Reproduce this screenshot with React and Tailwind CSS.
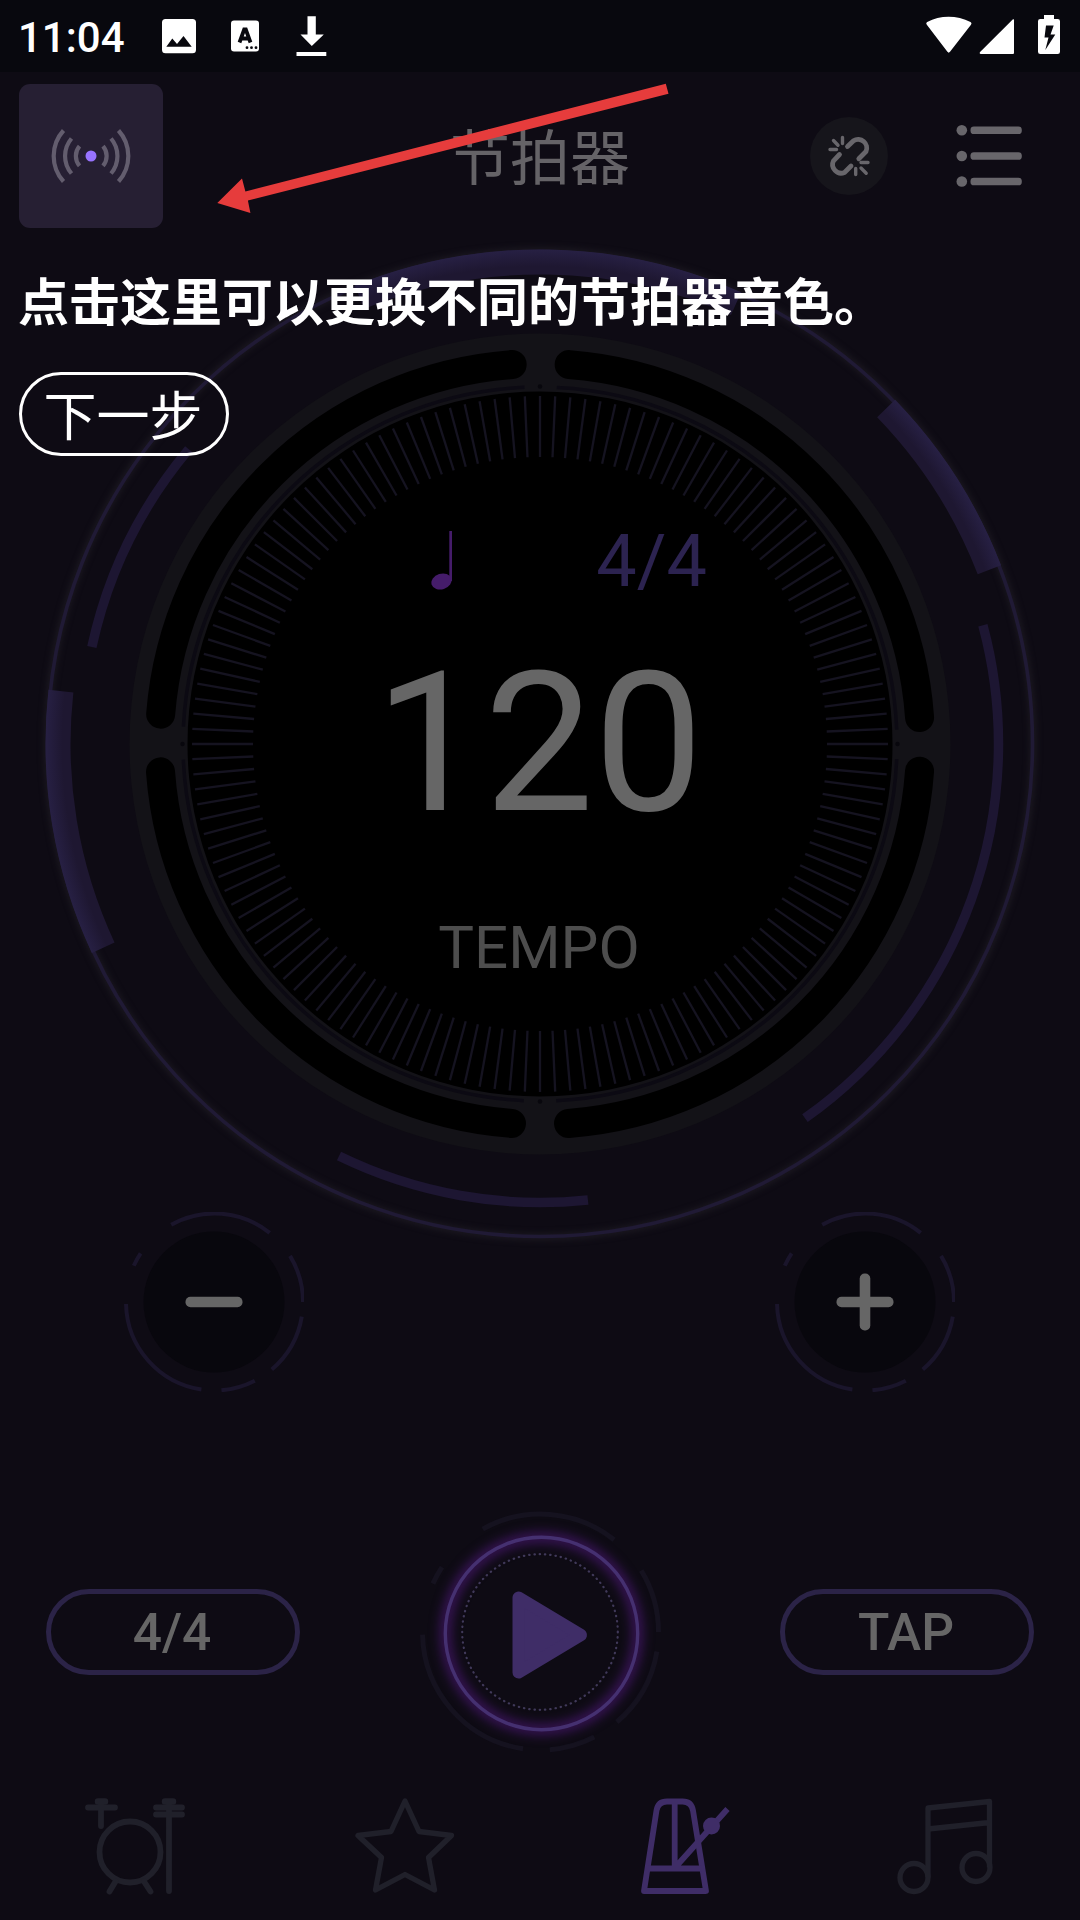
const CX = 540;
const CY = 504;

const TICKS = Array.from({ length: 144 }, (_, i) => i * 2.5);

// Point on a circle, angle in degrees, clockwise from 3 o'clock
const polar = (cx, cy, r, deg) => {
  const a = (deg * Math.PI) / 180;
  return [cx + r * Math.cos(a), cy + r * Math.sin(a)];
};

const arcPath = (cx, cy, r, from, to) => {
  const [x1, y1] = polar(cx, cy, r, from);
  const [x2, y2] = polar(cx, cy, r, to);
  return `M${x1} ${y1}A${r} ${r} 0 ${to - from > 180 ? 1 : 0} 1 ${x2} ${y2}`;
};

const THICK_ARCS = [
  [248, 294],
  [315.9, 338.8],
  [155, 186.3],
];

const THIN_ARCS = [
  [-15, 54.7],
  [84, 116],
  [192.2, 220],
];

const SLOTS = [
  [4.1, 85.7],
  [94.3, 175.8],
  [184.5, 265.8],
  [274.4, 356],
];

const BUTTON_ARCS = [
  [-119.3, -51.4],
  [-31.4, 0],
  [9.5, 49.7],
  [62.9, 85.5],
  [98.5, 178.7],
  [204.2, 213.4],
];

const StatusBar = () => (
  <div className="flex h-[72px] shrink-0 items-center justify-between bg-[#08080e] pl-[18px] pr-[19px] text-white">
    <div className="flex h-full items-center">
      <span className="w-36 pt-1 text-[42px] font-medium leading-none">11:04</span>
      <svg width="170" height="72" viewBox="162 0 170 72" fill="currentColor">
        <path
          fillRule="evenodd"
          d="M166 19h26.500a3.500 3.500 0 0 1 3.500 3.500v27.300a3.500 3.500 0 0 1-3.500 3.500H165.500a3.500 3.500 0 0 1-3.500-3.500V22.500a3.500 3.500 0 0 1 3.500-3.500zM166.300 46.700H191.700L183.500 36L177 44L172.300 38.500z"
        />
        <rect x="231" y="20.500" width="28" height="31" rx="3" />
        <path d="M239.500 42.500L244.200 29.500H245.800L250.500 42.500M241.500 38.500h7" fill="none" stroke="#08080e" strokeWidth="3.800" />
        <g fill="#08080e">
          <circle cx="247" cy="47.700" r="1.400" />
          <circle cx="251.500" cy="47.700" r="1.400" />
          <circle cx="256" cy="47.700" r="1.400" />
        </g>
        <path d="M307.500 16.300h8.300v18.200h8L311.800 46L300.500 34.500h7zM296.500 52h29.800v4H296.500z" />
      </svg>
    </div>
    <svg width="136" height="72" viewBox="925 0 136 72" fill="currentColor">
      <path d="M927 25c-1-1.200-1-2 .2-2.900C940 14.900 957 14.900 970.500 22.100c1.200.9 1.300 1.700.3 2.900L950 51.800c-.8 1.100-1.800 1.100-2.600 0z" />
      <path d="M1012.700 19.500c1-.8 1.300-.2 1.300.8V52.500c0 1-.5 1.500-1.500 1.500H980.800c-1.200 0-1.500-1-.7-1.900z" />
      <path
        fillRule="evenodd"
        d="M1044 15h10v4h3.700a2.300 2.300 0 0 1 2.300 2.300v30.400a2.300 2.300 0 0 1-2.300 2.300h-17.400a2.300 2.300 0 0 1-2.300-2.300V21.300a2.300 2.300 0 0 1 2.300-2.300h3.700zM1046 25.500L1044.500 37.500H1048.500L1045.300 50L1055.300 34.500H1050.500L1053.700 25.500z"
      />
    </svg>
  </div>
);

const Header = () => (
  <header className="flex h-[168px] shrink-0 items-center pl-[19px] pr-[58px]">
    <button className="flex size-36 items-center justify-center rounded-[11px] bg-[#261f33]">
      <svg width="80" height="56" viewBox="-40 -28 80 56" fill="none">
        <circle r="5.500" fill="#9873ff" />
        <g stroke="#635d6e" strokeWidth="4.200">
          <path d="M-11.500 -9.800A15 15 0 0 0 -11.500 9.800M-19.500 -17.500A27 27 0 0 0 -19.500 17.500M-27.500 -25.500A38 38 0 0 0 -27.500 25.500" />
          <path d="M12 -9.800A15 15 0 0 1 12 9.800M20 -17.500A27 27 0 0 1 20 17.500M27.500 -25.500A38 38 0 0 1 27.500 25.500" />
        </g>
      </svg>
    </button>
    <h1 className="ml-[287px] w-[182px] pt-[7px] text-[60px] leading-none text-[#656367]">节拍器</h1>
    <button className="ml-[178px] flex size-[78px] items-center justify-center rounded-full bg-[#16151b]">
      <svg width="44" height="44" viewBox="-22 -22 44 44" fill="none" stroke="#68666b" strokeWidth="4.800" strokeLinecap="round" strokeLinejoin="round">
        <path d="M-1.500 -9.500L4.500 -15.200A8.600 8.600 0 0 1 17 -4.500L9.800 2.800" />
        <path d="M-9.500 -1.500L-15.500 4.800A8.600 8.600 0 0 0 -4.500 16.500L2 10" />
        <path d="M-6.500 -18.500V-12.500M-15.500 -15.500L-11 -10.800M-19 -6.500H-12.500M6.700 12.500V18.500M12 12L17.200 17.200M12 6.500H19" strokeWidth="3.400" />
      </svg>
    </button>
    <button className="ml-[68px]">
      <svg width="66" height="64" viewBox="956 124 66 64" fill="#68666b">
        {[130.3, 156, 181.5].map((y) => (
          <g key={y}>
            <circle cx="961.800" cy={y} r="5.300" />
            <rect x="970.500" y={y - 3.8} width="51.300" height="7.600" rx="3.400" />
          </g>
        ))}
      </svg>
    </button>
  </header>
);

const Dial = () => (
  <section className="grid h-[1008px] shrink-0">
    <svg className="col-start-1 row-start-1" width="1080" height="1008" viewBox="0 0 1080 1008" fill="none">
      <defs>
        <filter id="glow" x="-10%" y="-10%" width="120%" height="120%" colorInterpolationFilters="sRGB">
          <feGaussianBlur stdDeviation="3" />
        </filter>
        <radialGradient id="band" gradientUnits="userSpaceOnUse" cx={CX} cy={CY} r="495">
          <stop offset="0.965" stopColor="#1e1731" />
          <stop offset="1" stopColor="#272044" />
        </radialGradient>
      </defs>
      <circle cx={CX} cy={CY} r="493" stroke="#1d1a22" strokeWidth="6" filter="url(#glow)" />
      <circle cx={CX} cy={CY} r="492.500" stroke="#201a35" strokeWidth="3.600" />
      {THICK_ARCS.map(([a, b]) => (
        <path key={a} d={arcPath(CX, CY, 482, a, b)} stroke="url(#band)" strokeWidth="25" />
      ))}
      {THIN_ARCS.map(([a, b]) => (
        <path key={a} d={arcPath(CX, CY, 458.5, a, b)} stroke="#1d1632" strokeWidth="9.500" />
      ))}

      <circle cx={CX} cy={CY} r="410.500" fill="#131217" />
      {SLOTS.map(([a, b]) => (
        <path key={a} d={arcPath(CX, CY, 380.5, a, b)} stroke="#000" strokeWidth="29" strokeLinecap="round" />
      ))}
      {SLOTS.map(([a, b]) => (
        <path key={a} d={arcPath(CX, CY, 357, a - 1.7, b + 1.7)} stroke="#0c0a13" strokeWidth="3.500" />
      ))}
      {[0, 90, 180, 270].map((a) => {
        const [x, y] = polar(CX, CY, 357.500, a);
        return <circle key={a} cx={x} cy={y} r="2.200" fill="#08070d" />;
      })}
      <circle cx={CX} cy={CY} r="352.500" fill="#000" />
      {TICKS.map((a) => {
        const [x1, y1] = polar(CX, CY, 287, a);
        const [x2, y2] = polar(CX, CY, 348, a);
        return <line key={a} x1={x1} y1={y1} x2={x2} y2={y2} stroke="#151320" strokeWidth="2.300" />;
      })}
    </svg>

    <div className="col-start-1 row-start-1 flex flex-col items-center pt-[282px]">
      <div className="ml-[58px] flex h-20 w-[276px] items-center justify-between">
        <svg width="24" height="64" viewBox="0 0 24 64" fill="#451c6a">
          <ellipse cx="10.500" cy="51.500" rx="10.300" ry="7.800" transform="rotate(-18 10.500 51.500)" />
          <path d="M18.300 1L21 1V51H18.300z" />
        </svg>
        <span className="text-[72px] leading-none text-[#2c2350]">4/4</span>
      </div>
      <div className="mr-0.5 mt-11 text-[195px] leading-none text-[#666]">120</div>
      <div className="mr-0.5 mt-[77px] text-[60px] leading-none text-[#4d4d4d]">TEMPO</div>
    </div>
  </section>
);

const StepButton = ({ plus }) => (
  <button>
    <svg width="180" height="180" viewBox="-90 -90 180 180" fill="none">
      <circle r="70.500" fill="#08070d" />
      {BUTTON_ARCS.map(([a, b]) => (
        <path key={a} d={arcPath(0.500, 0, 88.5, a, b)} stroke="#1a152b" strokeWidth="4" />
      ))}
      <rect x="-28.500" y="-5.300" width="57" height="10.600" rx="5" fill="#666" />
      {plus && <rect x="-5.300" y="-28.500" width="10.600" height="57" rx="5" fill="#666" />}
    </svg>
  </button>
);

const PlayButton = () => (
  <button>
    <svg width="264" height="264" viewBox="-132 -132 264 264" fill="none">
      <defs>
        <filter id="halo" x="-20%" y="-20%" width="140%" height="140%" colorInterpolationFilters="sRGB">
          <feGaussianBlur stdDeviation="5.500" />
        </filter>
      </defs>
      {BUTTON_ARCS.map(([a, b]) => (
        <path key={a} d={arcPath(0.500, 0, 118, a, b)} stroke="#15121f" strokeWidth="5" />
      ))}
      <circle cx="1.500" cy="1.500" r="96" stroke="#3a1459" strokeWidth="11" filter="url(#halo)" />
      <circle cx="1.500" cy="1.500" r="96.200" stroke="#453070" strokeWidth="3.400" />
      <circle cx="0" cy="0" r="77.800" stroke="#403959" strokeWidth="2.200" strokeLinecap="round" strokeDasharray="0.4 4.900" />
      <path d="M-21.500 -34.500V40.500L41 3z" fill="#3f2d67" stroke="#3f2d67" strokeWidth="12" strokeLinejoin="round" />
    </svg>
  </button>
);

const Pill = ({ children }) => (
  <button className="flex h-[86px] w-[254px] items-center justify-center rounded-full border-[5px] border-[#2b2347] pr-0.5 pt-0.5 text-[51.500px] font-medium leading-none text-[#666]">
    {children}
  </button>
);

const BottomNav = () => (
  <nav className="grid h-36 shrink-0 grid-cols-4 pb-1 text-[#20202a]">
    <button className="flex items-center justify-center">
      <svg width="110" height="110" viewBox="80 1791 110 110" fill="none" stroke="currentColor" strokeWidth="5.800" strokeLinecap="round">
        <circle cx="130" cy="1852" r="30.500" />
        <path d="M88 1807.500h27M101 1802v24M156 1807.500h26M156 1814.500h26M169 1802v89M115.500 1881.500l-6 10M144 1881.500l6.500 10" />
        <path d="M98 1801.500h7M165 1801.500h8" strokeWidth="6.500" />
      </svg>
    </button>
    <button className="flex items-center justify-center">
      <svg width="110" height="110" viewBox="350 1791 110 110" fill="none" stroke="currentColor" strokeWidth="5.300" strokeLinejoin="round">
        <path d="M405 1801L419 1831.500L451.500 1835.500L428.500 1857.500L434.500 1890L405 1874.500L375.500 1890L381.500 1857.500L358 1835.500L391 1831.500z" />
      </svg>
    </button>
    <button className="flex items-center justify-center text-[#3f2d67]">
      <svg width="110" height="110" viewBox="620 1791 110 110" fill="none" stroke="currentColor" strokeWidth="5.800" strokeLinejoin="round">
        <path d="M644 1891L656.500 1810.500Q658 1801.500 667 1801.500H682.500Q691.500 1801.500 693 1810.500L706 1891z" />
        <path d="M648 1868.500H702M674.700 1802V1868L727.500 1809" />
        <circle cx="711.500" cy="1826" r="8.500" fill="currentColor" stroke="none" />
      </svg>
    </button>
    <button className="flex items-center justify-center">
      <svg width="110" height="110" viewBox="890 1791 110 110" fill="none" stroke="currentColor" strokeWidth="5.300" strokeLinejoin="round">
        <circle cx="914" cy="1877.500" r="14" />
        <circle cx="976" cy="1867.500" r="14" />
        <path d="M928 1877.500V1808L989.500 1801.500V1867.500M928 1829L989.500 1822.500" />
      </svg>
    </button>
  </nav>
);

/** Onboarding layer that sits over the dimmed screen. */
const GuideOverlay = () => (
  <div className="pointer-events-none absolute inset-0 text-white">
    <svg className="absolute left-0 top-0" width="1080" height="240" viewBox="0 0 1080 240" fill="#e63c3c">
      <path d="M217.300 203L242 178.500L245.400 191.500L665.800 83.800L668.500 93.800L247.900 200.500L250.400 213z" />
    </svg>
    <div className="flex flex-col items-start pl-[18px] pt-[277px]">
      <p className="text-[51px] font-bold leading-[54px]">点击这里可以更换不同的节拍器音色。</p>
      <button className="ml-px mt-[41px] flex h-[84px] w-[210px] items-center justify-center rounded-full border-[3px] border-white pr-0.5 pt-[9px] text-[53px] leading-none">
        下一步
      </button>
    </div>
  </div>
);

export default function App() {
  return (
    <div className="relative flex h-[1920px] w-[1080px] flex-col overflow-hidden bg-[#0e0b14] font-['Roboto','Noto_Sans_CJK_SC',sans-serif]">
      <StatusBar />
      <Header />
      <Dial />
      <div className="-mt-9 flex h-[180px] shrink-0 justify-between pl-[124px] pr-[125px]">
        <StepButton />
        <StepButton plus />
      </div>
      <div className="mb-3 mt-[108px] flex h-[264px] shrink-0 items-center justify-between px-[46px]">
        <Pill>4/4</Pill>
        <PlayButton />
        <Pill>TAP</Pill>
      </div>
      <BottomNav />
      <GuideOverlay />
    </div>
  );
}
